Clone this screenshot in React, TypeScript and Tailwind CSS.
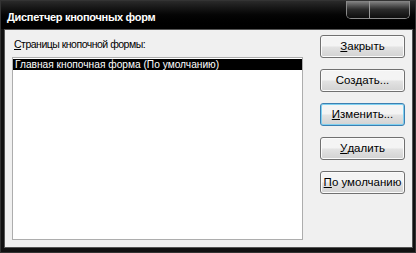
import React from "react";

const font = { fontFamily: '"Liberation Sans", Arial, sans-serif' };

function Btn({ children, focused }: { children: React.ReactNode; focused?: boolean }) {
  return (
    <button
      className={`h-[23px] w-[85px] rounded-[3px] border text-[11.5px] text-black flex items-center justify-center bg-gradient-to-b from-[#f4f4f4] from-45% via-[#e2e2e2] via-55% to-[#d2d2d2] ${
        focused
          ? "border-[#3c7fb1] shadow-[inset_0_0_0_1px_#7fd0f0]"
          : "border-[#707070] shadow-[inset_0_0_0_1px_#fbfbfb]"
      }`}
    >
      {children}
    </button>
  );
}

export default function App() {
  return (
    <div className="w-[416px] h-[253px] bg-[#111] flex flex-col border border-[#333]" style={font}>
      {/* title bar */}
      <div className="h-[28px] flex items-start justify-between bg-gradient-to-b from-[#2a2a2a] via-[#050505] to-[#000] relative">
        <span className="text-white font-bold text-[11px] pl-[6px] pt-[8px] tracking-[-0.3px]">
          Диспетчер кнопочных форм
        </span>
        <div className="flex mr-[5px] border border-t-0 border-[#8a8a8a] rounded-b-[5px] overflow-hidden">
          <div className="w-[23px] h-[17px] bg-gradient-to-b from-[#888] via-[#2b2b2b] to-[#0e0e0e] border-r border-[#9a9a9a]" />
          <div className="w-[39px] h-[17px] bg-gradient-to-b from-[#888] via-[#2b2b2b] to-[#0e0e0e]" />
        </div>
      </div>

      {/* content */}
      <div className="flex-1 ml-[3px] mr-[2px] mb-[4px] bg-[#f0f0f0] flex border border-[#555]">
        <div className="flex flex-col pl-[7px] pt-[6px] pb-[7px] w-[298px]">
          <div className="text-[10.5px] text-black pl-[2px] h-[21px] leading-[14px] pt-[1px] tracking-[-0.5px]">
            <span className="underline">С</span>траницы кнопочной формы:
          </div>
          <div className="flex-1 bg-white border border-[#adadad]">
            <div className="bg-black text-white text-[10.2px] leading-[11px] h-[11px] pl-[2px] mt-[1px]">
              Главная кнопочная форма (По умолчанию)
            </div>
          </div>
        </div>
        <div className="flex flex-col gap-[11px] pl-[17px] pt-[5px]">
          <Btn>
            <span className="underline">З</span>акрыть
          </Btn>
          <Btn>
            Соз<span className="underline">д</span>ать...
          </Btn>
          <Btn focused>
            <span className="underline">И</span>зменить...
          </Btn>
          <Btn>
            <span className="underline">У</span>далить
          </Btn>
          <Btn>
            <span className="underline">П</span>о умолчанию
          </Btn>
        </div>
      </div>
    </div>
  );
}
